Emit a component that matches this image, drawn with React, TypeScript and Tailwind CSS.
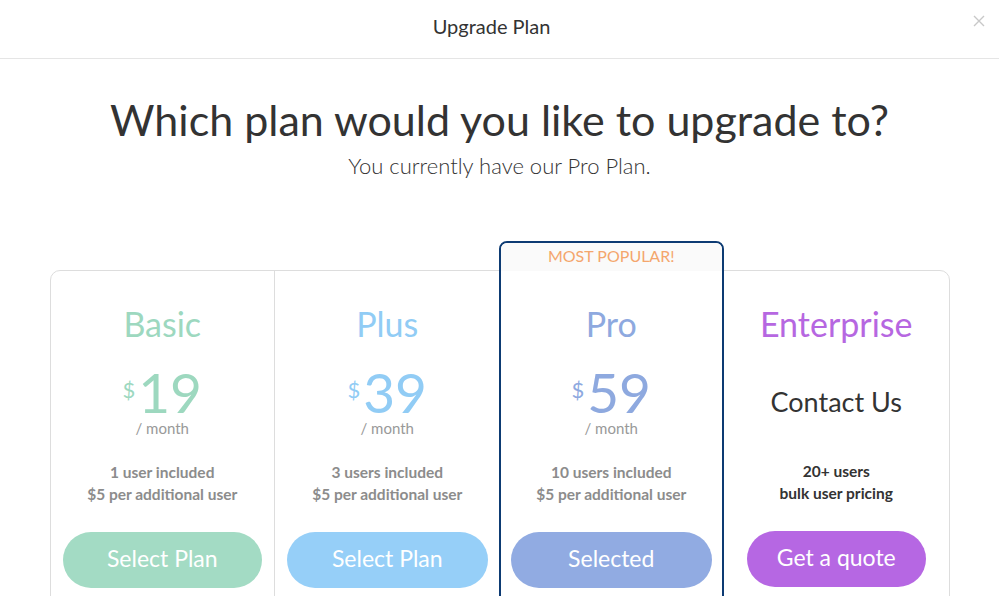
const plans = [
  {
    name: 'Basic',
    price: '19',
    color: 'text-[#9dd8bf]',
    button: 'bg-[#a3dbc4]',
    label: 'Select Plan',
    lines: ['1 user included', '$5 per additional user'],
  },
  {
    name: 'Plus',
    price: '39',
    color: 'text-[#91ccf5]',
    button: 'bg-[#96cff8]',
    label: 'Select Plan',
    lines: ['3 users included', '$5 per additional user'],
  },
  {
    name: 'Pro',
    price: '59',
    color: 'text-[#8ea9df]',
    button: 'bg-[#91abe2]',
    label: 'Selected',
    lines: ['10 users included', '$5 per additional user'],
    popular: true,
  },
]

function PlanBody({ plan }: { plan: (typeof plans)[number] }) {
  return (
    <div className="flex flex-col items-center pt-[33px] pb-10 px-3">
      <div className={`text-[34px] leading-[40px] ${plan.color}`}>{plan.name}</div>
      <div className={`mt-[20px] flex items-start ${plan.color}`}>
        <span className="text-[22px] leading-none mt-[15px] mr-[3px]">$</span>
        <span className="text-[55px] leading-[56px]">{plan.price}</span>
      </div>
      <div className="-mt-[2px] text-[15px] leading-[20px] text-[#999]">/ month</div>
      <div className="mt-[23px] text-[15.5px] leading-[22px] font-bold text-[#8c8c8c] text-center">
        {plan.lines.map((l) => (
          <div key={l}>{l}</div>
        ))}
      </div>
      <button
        className={`mt-[27px] h-[56px] w-full rounded-full text-white text-[23px] pb-[3px] ${plan.button}`}
      >
        {plan.label}
      </button>
    </div>
  )
}

export default function App() {
  return (
    <div className="h-[596px] overflow-hidden bg-white font-['Lato',sans-serif] text-[#333]">
      {/* modal header */}
      <div className="h-[59px] border-b border-[#e5e5e5] flex items-center justify-center relative pr-[16px]">
        <span className="text-[20px] -mt-[7px]">Upgrade Plan</span>
        <button className="absolute right-[10px] top-[11px] p-1">
          <svg width="12" height="12" viewBox="0 0 12 12">
            <path d="M1 1L11 11M11 1L1 11" stroke="#c8c8c8" strokeWidth="1.4" />
          </svg>
        </button>
      </div>

      <div className="pt-[33px] text-center">
        <h1 className="text-[43px] leading-[56px]">Which plan would you like to upgrade to?</h1>
        <p className="mt-[4px] text-[22px] leading-[28px] font-light">You currently have our Pro Plan.</p>
      </div>

      <div className="mt-[90px] mx-auto w-[900px] border border-[#dddddd] rounded-[10px] grid grid-cols-4">
        <div className="border-r border-[#dddddd]">
          <PlanBody plan={plans[0]} />
        </div>
        <div>
          <PlanBody plan={plans[1]} />
        </div>
        <div className="-mt-[30px] border-2 border-[#0d3b73] rounded-[8px] bg-white relative -ml-[1px]">
          <div className="h-[28px] bg-[#fafafa] rounded-t-[6px] text-center text-[16px] leading-[26px] text-[#f4a66d]">
            MOST POPULAR!
          </div>
          <div className="-mx-[2px]">
            <PlanBody plan={plans[2]} />
          </div>
        </div>
        <div className="flex flex-col items-center pt-[33px] pb-10 px-3">
          <div className="text-[34px] leading-[40px] text-[#b667e1]">Enterprise</div>
          <div className="mt-[18px] h-[76px] flex items-center justify-center text-[27px] text-[#333] pt-[4px]">
            Contact Us
          </div>
          <div className="mt-[22px] text-[15.5px] leading-[22px] font-bold text-[#333] text-center">
            <div>20+ users</div>
            <div>bulk user pricing</div>
          </div>
          <button className="mt-[27px] h-[56px] px-[30px] rounded-full bg-[#b667e3] text-white text-[23px] pb-[3px]">
            Get a quote
          </button>
        </div>
      </div>
    </div>
  )
}
